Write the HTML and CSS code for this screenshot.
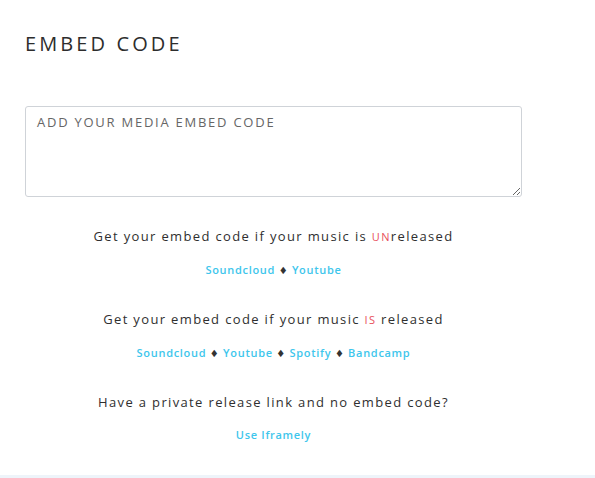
FILE: index.html
```html
<!DOCTYPE html>
<html>
<head>
<meta charset="utf-8">
<link rel="stylesheet" href="styles.css">
</head>
<body>
<main class="page">
  <h1 class="title">EMBED CODE</h1>
  <textarea class="embed" placeholder="ADD YOUR MEDIA EMBED CODE"></textarea>
  <section class="help">
    <p class="line">Get your embed code if your music is <span class="hl">UN</span>released</p>
    <p class="links"><a href="#">Soundcloud</a> <span class="sep">♦</span> <a href="#">Youtube</a></p>
    <p class="line">Get your embed code if your music <span class="hl">IS</span> released</p>
    <p class="links"><a href="#">Soundcloud</a> <span class="sep">♦</span> <a href="#">Youtube</a> <span class="sep">♦</span> <a href="#">Spotify</a> <span class="sep">♦</span> <a href="#">Bandcamp</a></p>
    <p class="line">Have a private release link and no embed code?</p>
    <p class="links"><a href="#">Use Iframely</a></p>
  </section>
</main>
<footer class="foot"></footer>
</body>
</html>
```

FILE: styles.css
```css
html, body {
  margin: 0;
  padding: 0;
  background: #fff;
}
body {
  font-family: "Open Sans", "DejaVu Sans", sans-serif;
  color: #333;
  height: 478px;
  display: flex;
  flex-direction: column;
}
.page {
  flex: 1;
  padding: 30px 25px 0 25px;
  width: 497px;
}
.title {
  margin: 0;
  font-size: 20px;
  font-weight: 500;
  letter-spacing: 3.1px;
  color: #2d2d2d;
  line-height: 28px;
}
.embed {
  display: block;
  box-sizing: border-box;
  margin-top: 48px;
  width: 497px;
  height: 91px;
  border: 1px solid #cfd3d8;
  border-radius: 3px;
  padding: 6px 11px;
  font-family: inherit;
  font-size: 13px;
  letter-spacing: 1.75px;
  resize: vertical;
}
.embed::placeholder {
  color: #666;
}
.help {
  text-align: center;
}
.line {
  margin: 32px 0 0 0;
  font-size: 13px;
  line-height: 20px;
  letter-spacing: 1.35px;
  color: #2f2f2f;
}
.line:first-child {
  margin-top: 29px;
}
.hl {
  color: #e8505b;
  font-size: 11px;
}
.links {
  margin: 13px 0 0 0;
  padding-top: 3px;
  font-size: 11px;
  line-height: 14px;
  font-weight: 600;
  letter-spacing: 0.7px;
}
.links a {
  color: #3ec6ec;
  text-decoration: none;
}
.sep {
  color: #333;
  font-size: 10px;
}
.foot {
  height: 3px;
  background: #eef4fa;
}
```
